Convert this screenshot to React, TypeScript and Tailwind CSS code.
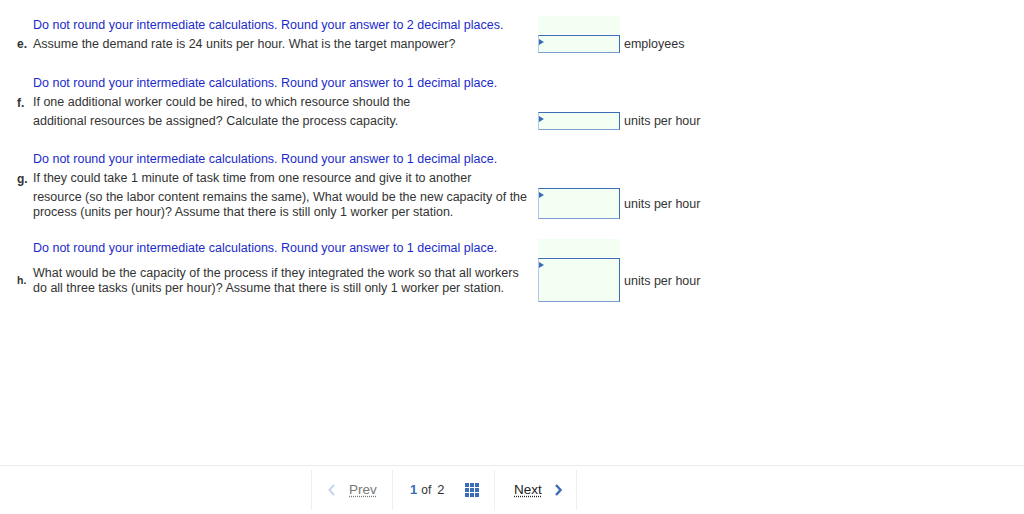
import React from "react";

const font = { fontFamily: '"Liberation Sans", Arial, Helvetica, sans-serif' };

function Input({ h }: { h: string }) {
  return (
    <div
      className={`relative w-[82px] ${h} bg-[#f2fff2] border border-t-[#3a6db5] border-r-[#3a6db5] border-b-[#7c9fd3] border-l-[#b3c9e8]`}
    >
      <div className="absolute left-0 top-[3px] w-0 h-0 border-t-[3px] border-b-[3px] border-l-[5px] border-t-transparent border-b-transparent border-l-[#3a6db5]" />
    </div>
  );
}

function BlueRow({ text, green, top }: { text: string; green?: boolean; top?: string }) {
  return (
    <div className={`flex h-[18px] items-center ${top ?? ""}`}>
      <div className="w-[33px] shrink-0" />
      <div className="w-[505px] shrink-0 text-[12.5px] text-[#1a2bc9] whitespace-nowrap">{text}</div>
      <div className={`w-[82px] h-[18px] shrink-0 ${green ? "bg-[#f2fff2]" : ""}`} />
    </div>
  );
}

function Label({ l }: { l: string }) {
  return <div className="w-[16px] shrink-0 ml-[17px] text-[12px] font-bold text-[#333]">{l}</div>;
}

export default function App() {
  return (
    <div className="w-[1024px] h-[514px] bg-white text-[#333] flex flex-col overflow-hidden" style={font}>
      <div className="flex flex-col">
        {/* e */}
        <BlueRow
          top="mt-[16px]"
          green
          text="Do not round your intermediate calculations. Round your answer to 2 decimal places."
        />
        <div className="flex items-center h-[20px]">
          <Label l="e." />
          <div className="w-[505px] shrink-0 text-[12.5px] whitespace-nowrap">
            Assume the demand rate is 24 units per hour. What is the target manpower?
          </div>
          <Input h="h-[18px]" />
          <div className="ml-[4px] text-[12.5px]">employees</div>
        </div>

        {/* f */}
        <BlueRow
          top="mt-[20px]"
          text="Do not round your intermediate calculations. Round your answer to 1 decimal place."
        />
        <div className="flex items-center h-[19px] pt-[2px]">
          <Label l="f." />
          <div className="w-[505px] shrink-0 text-[12.5px] whitespace-nowrap">
            If one additional worker could be hired, to which resource should the
          </div>
        </div>
        <div className="flex items-center h-[20px]">
          <div className="w-[33px] shrink-0" />
          <div className="w-[505px] shrink-0 text-[12.5px] whitespace-nowrap">
            additional resources be assigned? Calculate the process capacity.
          </div>
          <Input h="h-[18px]" />
          <div className="ml-[4px] text-[12.5px]">units per hour</div>
        </div>

        {/* g */}
        <BlueRow
          top="mt-[19px]"
          text="Do not round your intermediate calculations. Round your answer to 1 decimal place."
        />
        <div className="flex items-center h-[19px] pt-[2px]">
          <Label l="g." />
          <div className="w-[505px] shrink-0 text-[12.5px] whitespace-nowrap">
            If they could take 1 minute of task time from one resource and give it to another
          </div>
        </div>
        <div className="flex items-center h-[32px]">
          <div className="w-[33px] shrink-0" />
          <div className="w-[505px] shrink-0 text-[12.5px] leading-[15px] whitespace-nowrap pt-[3px]">
            <div>resource (so the labor content remains the same), What would be the new capacity of the</div>
            <div>process (units per hour)? Assume that there is still only 1 worker per station.</div>
          </div>
          <Input h="h-[31px]" />
          <div className="ml-[4px] text-[12.5px] pt-[3px]">units per hour</div>
        </div>

        {/* h */}
        <BlueRow
          top="mt-[20px]"
          green
          text="Do not round your intermediate calculations. Round your answer to 1 decimal place."
        />
        <div className="flex items-center h-[45px]">
          <div className="w-[16px] shrink-0 ml-[17px] text-[10.5px] font-bold text-[#333] pt-[2px]">h.</div>
          <div className="w-[505px] shrink-0 text-[12.5px] leading-[15px] whitespace-nowrap pt-[2px]">
            <div>What would be the capacity of the process if they integrated the work so that all workers</div>
            <div>do all three tasks (units per hour)? Assume that there is still only 1 worker per station.</div>
          </div>
          <Input h="h-[44px]" />
          <div className="ml-[4px] text-[12.5px] pt-[3px]">units per hour</div>
        </div>
      </div>

      {/* footer */}
      <div className="mt-auto border-t border-[#ececec] h-[49px] flex items-center">
        <div className="ml-[311px] flex h-[40px] items-stretch">
          <div className="w-[81px] border-l border-[#efefef] flex items-center">
            <svg className="ml-[16px]" width="8" height="12" viewBox="0 0 8 12">
              <path d="M6 1 L1.5 6 L6 11" fill="none" stroke="#c8d7ec" strokeWidth="2.2" />
            </svg>
            <span className="ml-[13px] text-[13.5px] text-[#777] underline decoration-dotted underline-offset-2">Prev</span>
          </div>
          <div className="w-[102px] border-l border-[#efefef] flex items-center">
            <span className="ml-[17px] text-[13px] font-bold text-[#3a6db5]">1</span>
            <span className="ml-[4px] text-[12px] text-[#333]">of</span>
            <span className="ml-[6px] text-[13px] text-[#333]">2</span>
            <svg className="ml-[21px]" width="15" height="15" viewBox="0 0 15 15">
              {[0, 5, 10].map((y) =>
                [0, 5, 10].map((x) => <rect key={`${x}-${y}`} x={x} y={y} width="4" height="4" fill="#3a6db5" />)
              )}
            </svg>
          </div>
          <div className="w-[83px] border-l border-r border-[#efefef] flex items-center">
            <span className="ml-[19px] text-[13.5px] text-[#222] underline decoration-dotted underline-offset-2">Next</span>
            <svg className="ml-[12px]" width="8" height="12" viewBox="0 0 8 12">
              <path d="M2 1 L6.5 6 L2 11" fill="none" stroke="#3a6db5" strokeWidth="2.4" />
            </svg>
          </div>
        </div>
      </div>
    </div>
  );
}
